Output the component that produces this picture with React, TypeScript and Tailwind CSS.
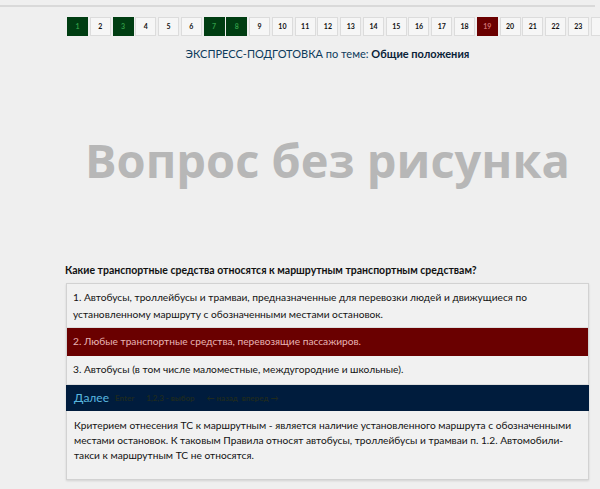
import React from "react";

const green = [1, 3, 7, 8];
const red = [19];

export default function App() {
  const nums = Array.from({ length: 24 }, (_, i) => i + 1);
  return (
    <div
      className="w-[600px] h-[489px] overflow-hidden bg-[#efefef] relative"
      style={{ fontFamily: 'Lato, "Open Sans", sans-serif' }}
    >
      <div className="h-[5px]" />
      <div className="h-[2px] w-[595px] bg-[#d9d9d9]" />
      <div className="flex gap-[1.77px] ml-[67px] mt-[10px] w-[700px]">
        {nums.map((n) => {
          const isG = green.includes(n);
          const isR = red.includes(n);
          return (
            <div
              key={n}
              className={
                "w-[21px] h-[19px] shrink-0 flex items-center justify-center text-[7px] font-bold border " +
                (isG
                  ? "bg-[#003d12] border-[#003d12] text-[#2f9a45]"
                  : isR
                  ? "bg-[#6a0000] border-[#6a0000] text-[#d07070]"
                  : "bg-[#f6f6f6] border-[#dcdcdc] text-[#111]")
              }
            >
              {n < 24 ? n : ""}
            </div>
          );
        })}
      </div>
      <div className="ml-[66px] w-[523px]">
        <div className="text-center text-[11px] text-[#0d3b5c] mt-[10px] leading-[16px]">
          ЭКСПРЕСС-ПОДГОТОВКА по теме: <span className="font-bold text-[#0a2238]">Общие положения</span>
        </div>
        <div className="h-[200px] flex items-start justify-center pt-[75px]">
          <div
            className="text-[47px] font-bold text-[#b7b7b7] leading-none"
            style={{ fontFamily: '"Open Sans", sans-serif' }}
          >
            Вопрос без рисунка
          </div>
        </div>
        <div className="text-[10.5px] font-bold text-[#111] leading-[16px] -ml-[1px]">
          Какие транспортные средства относятся к маршрутным транспортным средствам?
        </div>
        <div className="mt-[5px] border border-[#d2d2d2] bg-[#f1f1f1] shadow-[0_1px_2px_rgba(0,0,0,0.12)]">
          <div className="px-[6px] pt-[5px] pb-[4px] text-[10.2px] text-[#111] leading-[17px] border-b border-[#dedede] whitespace-nowrap">
            1. Автобусы, троллейбусы и трамваи, предназначенные для перевозки людей и движущиеся по
            <br />
            установленному маршруту с обозначенными местами остановок.
          </div>
          <div className="bg-[#6a0000] px-[6px] h-[28px] flex items-center text-[10.2px] text-[#e8b4b4]">
            2. Любые транспортные средства, перевозящие пассажиров.
          </div>
          <div className="px-[6px] h-[29px] flex items-center text-[10.2px] text-[#111] border-b border-[#dedede]">
            3. Автобусы (в том числе маломестные, междугородние и школьные).
          </div>
          <div className="bg-[#001c3d] h-[26px] flex items-center px-[8px] gap-[6px] -mx-[1px]">
            <span className="text-[12px] text-[#5ab8e0]">Далее</span>
            <span className="text-[8px] font-bold text-[#1e2a20]">Enter</span>
            <span className="text-[8px] font-bold text-[#1e2a20] ml-[6px]">1,2,3 - выбор</span>
            <span className="text-[8px] font-bold text-[#1e2a20] ml-[6px]">← назад&nbsp; вперед →</span>
          </div>
          <div className="px-[7px] pt-[7px] pb-[16px] text-[10.2px] text-[#111] leading-[15px] whitespace-nowrap">
            Критерием отнесения ТС к маршрутным - является наличие установленного маршрута с обозначенными
            <br />
            местами остановок. К таковым Правила относят автобусы, троллейбусы и трамваи п. 1.2. Автомобили-
            <br />
            такси к маршрутным ТС не относятся.
          </div>
        </div>
      </div>
    </div>
  );
}
